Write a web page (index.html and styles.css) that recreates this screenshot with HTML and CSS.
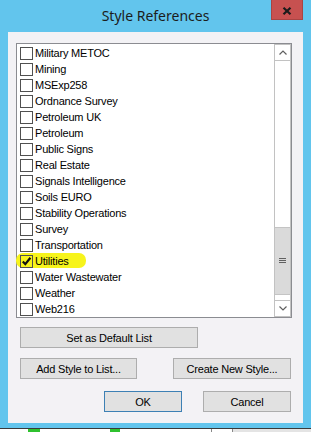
FILE: index.html
```html
<!DOCTYPE html>
<html lang="en">
<head>
    <meta charset="UTF-8">
    <title>Style References</title>
    <link rel="stylesheet" href="styles.css">
</head>
<body>
    <div class="window">
        <div class="titlebar">
            <span></span>
            <div class="title">Style References</div>
            <button class="close" type="button">
                <svg width="10" height="8" viewBox="0 0 10 8"><path d="M1.5 0.8 L8.5 7.2 M8.5 0.8 L1.5 7.2" stroke="#1b1b1b" stroke-width="2.2"/></svg>
            </button>
        </div>

        <div class="client">
            <div class="listbox">
                <ul class="items">
                    <li class="item"><span class="box"></span><span class="label">Military METOC</span></li>
                    <li class="item"><span class="box"></span><span class="label">Mining</span></li>
                    <li class="item"><span class="box"></span><span class="label">MSExp258</span></li>
                    <li class="item"><span class="box"></span><span class="label">Ordnance Survey</span></li>
                    <li class="item"><span class="box"></span><span class="label">Petroleum UK</span></li>
                    <li class="item"><span class="box"></span><span class="label">Petroleum</span></li>
                    <li class="item"><span class="box"></span><span class="label">Public Signs</span></li>
                    <li class="item"><span class="box"></span><span class="label">Real Estate</span></li>
                    <li class="item"><span class="box"></span><span class="label">Signals Intelligence</span></li>
                    <li class="item"><span class="box"></span><span class="label">Soils EURO</span></li>
                    <li class="item"><span class="box"></span><span class="label">Stability Operations</span></li>
                    <li class="item"><span class="box"></span><span class="label">Survey</span></li>
                    <li class="item"><span class="box"></span><span class="label">Transportation</span></li>
                    <li class="item checked">
                        <span class="box"><svg width="11" height="11" viewBox="0 0 11 11"><path d="M1.8 5.6 L4.3 8.2 L9.4 1.8" fill="none" stroke="#111" stroke-width="2.2"/></svg></span>
                        <span class="label">Utilities</span>
                    </li>
                    <li class="item"><span class="box"></span><span class="label">Water Wastewater</span></li>
                    <li class="item"><span class="box"></span><span class="label">Weather</span></li>
                    <li class="item"><span class="box"></span><span class="label">Web216</span></li>
                </ul>
                <div class="scrollbar">
                    <div class="arrow up">
                        <svg width="8" height="5" viewBox="0 0 8 5"><path d="M0.5 4.5 L4 1 L7.5 4.5" fill="none" stroke="#5f5f5f" stroke-width="1.2"/></svg>
                    </div>
                    <div class="track">
                        <div class="thumb">
                            <svg width="7" height="6" viewBox="0 0 7 6"><path d="M0 0.5 H7 M0 2.5 H7 M0 4.5 H7" stroke="#606060" stroke-width="1"/></svg>
                        </div>
                    </div>
                    <div class="arrow down">
                        <svg width="8" height="5" viewBox="0 0 8 5"><path d="M0.5 0.5 L4 4 L7.5 0.5" fill="none" stroke="#5f5f5f" stroke-width="1.2"/></svg>
                    </div>
                </div>
            </div>

            <div class="actions">
                <div class="row">
                    <button class="btn default-list" type="button">Set as Default List</button>
                </div>
                <div class="row split">
                    <button class="btn add" type="button">Add Style to List...</button>
                    <button class="btn create" type="button">Create New Style...</button>
                </div>
                <div class="row end">
                    <button class="btn ok" type="button">OK</button>
                    <button class="btn cancel" type="button">Cancel</button>
                </div>
            </div>
        </div>

        <div class="desktop">
            <span class="green one"></span>
            <span class="green two"></span>
            <span class="gap"></span>
            <span class="tile"></span>
        </div>
    </div>
</body>
</html>
```

FILE: styles.css
```css
body {
    margin: 0;
    font-family: "Liberation Sans", Arial, sans-serif;
    background: #ffffff;
}

.window {
    width: 311px;
    height: 432px;
    background-color: #62c5ed;
    display: flex;
    flex-direction: column;
    overflow: hidden;
}

.titlebar {
    height: 32px;
    flex: none;
    display: grid;
    grid-template-columns: 32px 1fr 32px;
    padding: 0 8px;
}

.title {
    text-align: center;
    font-family: "Noto Sans", "Open Sans", sans-serif;
    font-size: 14px;
    line-height: 32px;
    color: #1c1c1c;
}

.close {
    width: 32px;
    height: 20px;
    padding: 0;
    margin: 0;
    border: 1px solid #a84443;
    border-top: none;
    background-color: #c75150;
    display: flex;
    align-items: center;
    justify-content: center;
    padding-top: 3px;
}

.client {
    flex: none;
    height: 391px;
    margin: 0 8px;
    box-sizing: border-box;
    padding: 11px 11px 0 8px;
    background-color: #f3f2f5;
}

.listbox {
    height: 275px;
    box-sizing: border-box;
    border: 1px solid #8b8c91;
    background-color: #ffffff;
    display: flex;
}

.items {
    flex: 1;
    list-style: none;
    margin: 0;
    padding: 1px 0 0 3px;
}

.item {
    height: 16px;
    display: flex;
    align-items: flex-start;
    gap: 2px;
    position: relative;
    font-size: 11px;
    line-height: 16px;
    color: #000;
}

.box {
    width: 13px;
    height: 13px;
    margin-top: 2px;
    box-sizing: border-box;
    border: 1px solid #505050;
    background-color: #ffffff;
    display: flex;
    align-items: center;
    justify-content: center;
    position: relative;
    z-index: 1;
}

.label {
    position: relative;
    z-index: 1;
    letter-spacing: -0.2px;
}

/* highlighter mark over the checked row */
.checked::before {
    content: "";
    position: absolute;
    left: -4px;
    top: 0;
    width: 70px;
    height: 15px;
    border-radius: 7px;
    background-color: #f7f41c;
}

.checked .box {
    background-color: #f7f41c;
}

.scrollbar {
    width: 17px;
    flex: none;
    box-sizing: border-box;
    border: 1px solid #c2c2c2;
    display: flex;
    flex-direction: column;
    background-color: #ffffff;
}

.arrow {
    height: 16px;
    flex: none;
    box-sizing: border-box;
    display: flex;
    align-items: center;
    justify-content: center;
}

.arrow.up {
    border-bottom: 1px solid #c2c2c2;
}

.arrow.down {
    border-top: 1px solid #c2c2c2;
}

.track {
    flex: 1;
    display: flex;
    flex-direction: column;
}

.thumb {
    margin-top: 166px;
    height: 68px;
    box-sizing: border-box;
    border-top: 1px solid #c4c4c4;
    border-bottom: 1px solid #c4c4c4;
    background-color: #dadada;
    display: flex;
    align-items: center;
    justify-content: center;
}

.actions {
    padding: 9px 1px 0 4px;
    display: flex;
    flex-direction: column;
}

.row {
    display: flex;
}

.row.split {
    margin-top: 10px;
    justify-content: space-between;
}

.row.end {
    margin-top: 12px;
    justify-content: flex-end;
    gap: 21px;
}

.btn {
    height: 21px;
    padding: 0;
    margin: 0;
    font-family: "Liberation Sans", Arial, sans-serif;
    font-size: 11px;
    letter-spacing: -0.2px;
    color: #000;
    background-color: #e1e1e1;
    border: 1px solid #adadad;
}

.default-list {
    width: 178px;
}

.add {
    width: 117px;
}

.create {
    width: 118px;
}

.ok {
    width: 78px;
    border-color: #3d80b4;
}

.cancel {
    width: 88px;
}

.desktop {
    margin-top: 5px;
    flex: 1;
    border-top: 1px solid #3a3a3a;
    background-color: #ffffff;
    display: flex;
    padding-left: 28px;
}

.green {
    width: 12px;
    height: 3px;
    background-color: #2fc12f;
}

.green.two {
    margin-left: 70px;
    width: 10px;
}

.gap {
    flex: 1;
    border-right: 1px solid #888;
    margin-right: 20px;
}

.tile {
    width: 78px;
    border-left: 1px solid #888;
    background-color: #e4e4e4;
}
```
